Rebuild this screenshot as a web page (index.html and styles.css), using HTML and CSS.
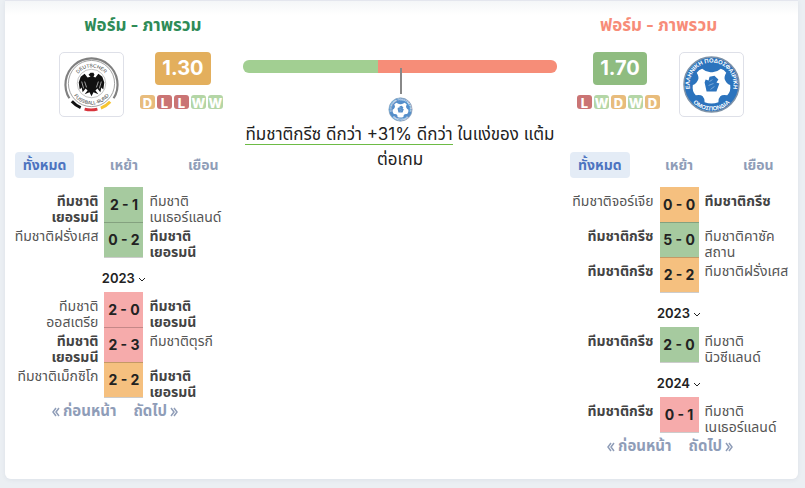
FILE: index.html
```
<!DOCTYPE html>
<html lang="th">
<head>
    <meta charset="UTF-8">
    <meta name="viewport" content="width=device-width, initial-scale=1.0">
    <title>ฟอร์ม - ภาพรวม</title>
    <link rel="stylesheet" href="styles.css">
</head>
<body>
    <svg class="defs" width="0" height="0" aria-hidden="true">
        <defs>
            <symbol id="greece" viewBox="0 0 60 60">
                <circle cx="30" cy="30" r="28" fill="#2b73bd" stroke="#7f93a8" stroke-width="1.500"/>
                <path d="M20.500 14 Q25 18 30 17.500 Q35 18 39.500 14 Q43 15 45 18 Q42 23 44 26 Q46 30 49 30.500 Q50 37 46 41 Q41 40 39 42 Q37 44 37 48 Q30 50.500 23 48 Q23 44 21 42 Q19 40 14 41 Q10 37 11 30.500 Q14 30 16 26 Q18 23 15 18 Q17 15 20.500 14 Z" fill="#fff"/>
                <path d="M23 28 L24 25 L27 26 L28 22 L33 21 L37 25 L35 28 L38 29 L35 37 L25 37 Z" fill="#2b73bd"/>
                <path d="M28 27 L31 25 M27 31 L32 29 M29 35 L33 32" stroke="#8fb6df" stroke-width=".8"/>
                <path id="greeceTop" d="M10.700 41.100 A22.300 22.300 0 1 1 49.300 41.100" fill="none"/>
                <path id="greeceBottom" d="M5.500 40 A26.500 26.500 0 0 0 54.500 40" fill="none"/>
                <text class="crest-text greek"><textPath href="#greeceTop" startOffset="50%" text-anchor="middle">ΕΛΛΗΝΙΚΗ ΠΟΔΟΣΦΑΙΡΙΚΗ</textPath></text>
                <text class="crest-text greek"><textPath href="#greeceBottom" startOffset="50%" text-anchor="middle">ΟΜΟΣΠΟΝΔΙΑ</textPath></text>
            </symbol>
        </defs>
    </svg>

    <main class="card">
        <section class="panel home">
            <h2 class="title">ฟอร์ม - ภาพรวม</h2>
            <div class="summary">
                <div class="crest">
                    <svg viewBox="0 0 60 60" role="img" aria-label="Deutscher Fussball-Bund">
                        <path d="M7.500 44 A26.500 26.500 0 1 1 52.500 44" fill="none" stroke="#808080" stroke-width="2.200"/>
                        <path d="M10 47 A26 26 0 0 0 19 53.500" fill="none" stroke="#111" stroke-width="3"/>
                        <path d="M23 55 A26.500 26.500 0 0 0 36 55" fill="none" stroke="#d8343c" stroke-width="3"/>
                        <path d="M39.500 54 A26 26 0 0 0 49 47.500" fill="none" stroke="#f6c532" stroke-width="3"/>
                        <circle cx="30" cy="29" r="23.500" fill="none" stroke="#777" stroke-width=".7"/>
                        <circle cx="30" cy="29" r="14.500" fill="none" stroke="#999" stroke-width=".6"/>
                        <path d="M27 20 L29 18 L32 18 L33 20 L32 22 L34 23 L37 19 L41 22 L43 28 L42 35 L40 33 L39 38 L36 34 L34 36 L37 40 L32 38 L30 42 L28 38 L23 40 L26 36 L24 34 L21 38 L20 33 L18 35 L17 28 L19 22 L23 19 L26 23 L29 22 Z" fill="#111"/>
                        <path d="M20 27 L22 34 M23 27 L25 33 M40 27 L38 34 M37 27 L35 33" stroke="#fff" stroke-width=".6"/>
                        <path id="dfbTop" d="M12.500 30 A17.500 17.500 0 1 1 47.500 30" fill="none"/>
                        <path id="dfbBottom" d="M8.500 33 A22 22 0 0 0 51.500 33" fill="none"/>
                        <text class="crest-text"><textPath href="#dfbTop" startOffset="50%" text-anchor="middle">DEUTSCHER</textPath></text>
                        <text class="crest-text"><textPath href="#dfbBottom" startOffset="50%" text-anchor="middle">FUSSBALL-BUND</textPath></text>
                    </svg>
                </div>
                <div class="form">
                    <div class="rating draw">1.30</div>
                    <div class="badges">
                        <span class="badge d">D</span><span class="badge l">L</span><span class="badge l">L</span><span class="badge w">W</span><span class="badge w">W</span>
                    </div>
                </div>
            </div>
            <div class="tabs">
                <button class="tab active">ทั้งหมด</button>
                <button class="tab">เหย้า</button>
                <button class="tab">เยือน</button>
            </div>
            <table class="matches">
                <tr>
                    <td class="team"><div><b>ทีมชาติ<br>เยอรมนี</b></div></td>
                    <td class="score win">2 - 1</td>
                    <td class="team"><div>ทีมชาติ<br>เนเธอร์แลนด์</div></td>
                </tr>
                <tr>
                    <td class="team"><div>ทีมชาติฝรั่งเศส</div></td>
                    <td class="score win">0 - 2</td>
                    <td class="team"><div><b>ทีมชาติ<br>เยอรมนี</b></div></td>
                </tr>
                <tr>
                    <td class="year" colspan="3"><button>2023 <svg viewBox="0 0 8 6"><path d="M1 1 L4 4 L7 1"/></svg></button></td>
                </tr>
                <tr>
                    <td class="team"><div>ทีมชาติ<br>ออสเตรีย</div></td>
                    <td class="score loss">2 - 0</td>
                    <td class="team"><div><b>ทีมชาติ<br>เยอรมนี</b></div></td>
                </tr>
                <tr>
                    <td class="team"><div><b>ทีมชาติ<br>เยอรมนี</b></div></td>
                    <td class="score loss">2 - 3</td>
                    <td class="team"><div>ทีมชาติตุรกี</div></td>
                </tr>
                <tr>
                    <td class="team"><div>ทีมชาติเม็กซิโก</div></td>
                    <td class="score tie">2 - 2</td>
                    <td class="team"><div><b>ทีมชาติ<br>เยอรมนี</b></div></td>
                </tr>
            </table>
            <nav class="pager">
                <a href="#"><svg viewBox="0 0 8 10"><path d="M4 1 L1 5 L4 9 M7 1 L4 5 L7 9"/></svg>ก่อนหน้า</a>
                <a href="#">ถัดไป<svg viewBox="0 0 8 10"><path d="M1 1 L4 5 L1 9 M4 1 L7 5 L4 9"/></svg></a>
            </nav>
        </section>

        <section class="compare">
            <div class="bar">
                <div class="bar-home"></div>
                <div class="bar-away"></div>
                <div class="pointer"></div>
            </div>
            <svg class="mini-crest"><use href="#greece"/></svg>
            <p class="verdict"><span class="better">ทีมชาติกรีซ ดีกว่า +31% ดีกว่า</span> ในแง่ของ แต้ม<br>ต่อเกม</p>
        </section>

        <section class="panel away">
            <h2 class="title">ฟอร์ม - ภาพรวม</h2>
            <div class="summary">
                <div class="crest">
                    <svg role="img" aria-label="ทีมชาติกรีซ"><use href="#greece"/></svg>
                </div>
                <div class="form">
                    <div class="rating good">1.70</div>
                    <div class="badges">
                        <span class="badge l">L</span><span class="badge w">W</span><span class="badge d">D</span><span class="badge w">W</span><span class="badge d">D</span>
                    </div>
                </div>
            </div>
            <div class="tabs">
                <button class="tab active">ทั้งหมด</button>
                <button class="tab">เหย้า</button>
                <button class="tab">เยือน</button>
            </div>
            <table class="matches">
                <tr>
                    <td class="team"><div>ทีมชาติจอร์เจีย</div></td>
                    <td class="score tie">0 - 0</td>
                    <td class="team"><div><b>ทีมชาติกรีซ</b></div></td>
                </tr>
                <tr>
                    <td class="team"><div><b>ทีมชาติกรีซ</b></div></td>
                    <td class="score win">5 - 0</td>
                    <td class="team"><div>ทีมชาติคาซัค<br>สถาน</div></td>
                </tr>
                <tr>
                    <td class="team"><div><b>ทีมชาติกรีซ</b></div></td>
                    <td class="score tie">2 - 2</td>
                    <td class="team"><div>ทีมชาติฝรั่งเศส</div></td>
                </tr>
                <tr>
                    <td class="year" colspan="3"><button>2023 <svg viewBox="0 0 8 6"><path d="M1 1 L4 4 L7 1"/></svg></button></td>
                </tr>
                <tr>
                    <td class="team"><div><b>ทีมชาติกรีซ</b></div></td>
                    <td class="score win">2 - 0</td>
                    <td class="team"><div>ทีมชาติ<br>นิวซีแลนด์</div></td>
                </tr>
                <tr>
                    <td class="year" colspan="3"><button>2024 <svg viewBox="0 0 8 6"><path d="M1 1 L4 4 L7 1"/></svg></button></td>
                </tr>
                <tr>
                    <td class="team"><div><b>ทีมชาติกรีซ</b></div></td>
                    <td class="score loss">0 - 1</td>
                    <td class="team"><div>ทีมชาติ<br>เนเธอร์แลนด์</div></td>
                </tr>
            </table>
            <nav class="pager">
                <a href="#"><svg viewBox="0 0 8 10"><path d="M4 1 L1 5 L4 9 M7 1 L4 5 L7 9"/></svg>ก่อนหน้า</a>
                <a href="#">ถัดไป<svg viewBox="0 0 8 10"><path d="M1 1 L4 5 L1 9 M4 1 L7 5 L4 9"/></svg></a>
            </nav>
        </section>
    </main>
</body>
</html>
```
FILE: styles.css
```
* {
    box-sizing: border-box;
}
body {
    margin: 0;
    padding: 0 7px 9px 5px;
    background-color: #ebeff3;
    font-family: Inter, "Noto Sans Thai", "Noto Sans", sans-serif;
    color: #222;
}
button {
    border: 0;
    padding: 0;
    background: none;
    font-family: inherit;
    cursor: pointer;
}
.defs {
    position: absolute;
}
.card {
    display: grid;
    grid-template-columns: 30% 1fr 30%;
    padding-bottom: 16px;
    border-top: 1px solid #e4e6ee;
    border-radius: 0 0 6px 6px;
    background: linear-gradient(#f4f6f8, #fff 14px);
    box-shadow: 0 1px 4px rgba(60, 80, 120, 0.08);
}
.title {
    margin: 0;
    padding: 12px 0 0 38px;
    height: 51px;
    font-size: 17px;
    line-height: 24px;
    font-weight: 700;
    text-align: center;
    color: #2e8b57;
}
.away .title {
    padding: 12px 41px 0 0;
    color: #f78c78;
}
.summary {
    display: flex;
    justify-content: center;
    gap: 16px;
    padding-left: 34px;
    height: 100px;
}
.away .summary {
    flex-direction: row-reverse;
    gap: 19px;
    padding: 0 37px 0 0;
}
.crest {
    width: 65px;
    height: 65px;
    padding: 2px;
    border: 1px solid #dee0e8;
    border-radius: 5px;
}
.crest svg {
    display: block;
    width: 59px;
    height: 59px;
}
.crest-text {
    font-family: "Liberation Sans", sans-serif;
    font-size: 5px;
    fill: #333;
}
.crest-text.greek {
    font-size: 6px;
    font-weight: bold;
    fill: #fff;
}
.form {
    display: flex;
    flex-direction: column;
    align-items: center;
    gap: 10px;
}
.rating {
    margin-left: 3px;
    padding: 0 7px;
    border-radius: 4px;
    font-size: 20px;
    line-height: 33px;
    font-weight: 700;
    text-align: center;
    color: #fff;
}
.rating.draw {
    background-color: #e3af5d;
}
.rating.good {
    background-color: #8fbc80;
}
.badges {
    display: flex;
    gap: 2px;
}
.badge {
    display: flex;
    justify-content: center;
    width: 15px;
    height: 14px;
    border-radius: 3px;
    font-size: 13px;
    line-height: 16px;
    font-weight: 800;
    color: #fff;
}
.badge.d {
    background-color: #e8bc7c;
}
.badge.l {
    background-color: #ca7474;
}
.badge.w {
    background-color: #b4d6a6;
}
.tabs {
    display: grid;
    grid-template-columns: repeat(3, 1fr);
    justify-items: center;
    height: 35px;
}
.tab {
    height: 26px;
    padding: 0 8px;
    border-radius: 4px;
    font-size: 14px;
    line-height: 26px;
    font-weight: 700;
    color: #8f9db8;
}
.tab.active {
    background-color: #e4ecf6;
    color: #4d74c0;
}
.matches {
    width: 100%;
    border-collapse: collapse;
    table-layout: fixed;
}
.matches td {
    height: 35px;
    padding: 0;
}
.team div {
    height: 35px;
    padding: 6px 6px 0;
    font-size: 14px;
    line-height: 16px;
    white-space: nowrap;
    color: #555;
    overflow: hidden;
}
.team b {
    font-weight: 700;
    color: #444;
}
.team:first-child {
    text-align: right;
}
.matches .score {
    width: 39px;
    border-bottom: 1px solid rgba(0, 0, 0, 0.2);
    font-size: 14px;
    font-weight: 700;
    text-align: center;
}
.score.win {
    background-color: #a6ca9f;
}
.score.loss {
    background-color: #f6abab;
}
.score.tie {
    background-color: #f5c07f;
}
.year {
    text-align: center;
}
.year button {
    margin-top: 8px;
    font-size: 13px;
    font-weight: 600;
    color: #222;
}
.year svg {
    width: 8px;
    height: 6px;
}
.year path, .pager path {
    fill: none;
    stroke: currentColor;
    stroke-width: 1;
}
.pager path {
    stroke-width: 1.5;
}
.pager {
    display: flex;
    justify-content: center;
    gap: 17px;
    height: 28px;
    margin-bottom: 2px;
    padding-right: 18px;
}
.pager a {
    display: flex;
    align-items: center;
    gap: 3px;
    font-size: 15px;
    font-weight: 700;
    color: #8f9db8;
    text-decoration: none;
}
.pager svg {
    width: 8px;
    height: 10px;
}
.compare {
    padding: 59px 3px 0 0;
    text-align: center;
}
.bar {
    position: relative;
    display: flex;
    height: 13px;
}
.bar-home {
    width: 43%;
    border-radius: 6px 0 0 6px;
    background-color: #a2cf92;
}
.bar-away {
    flex: 1;
    border-radius: 0 6px 6px 0;
    background-color: #f68d78;
}
/* line from the bar down to the leading team's crest */
.pointer {
    position: absolute;
    top: 8px;
    left: 50%;
    width: 2px;
    height: 26px;
    background-color: #888;
}
.mini-crest {
    display: block;
    width: 25px;
    height: 25px;
    margin: 24px auto 0;
    opacity: 0.8;
}
.verdict {
    margin: 0;
    font-size: 17px;
    line-height: 25px;
}
.better {
    border-bottom: 1px solid #6dbb45;
}
```
